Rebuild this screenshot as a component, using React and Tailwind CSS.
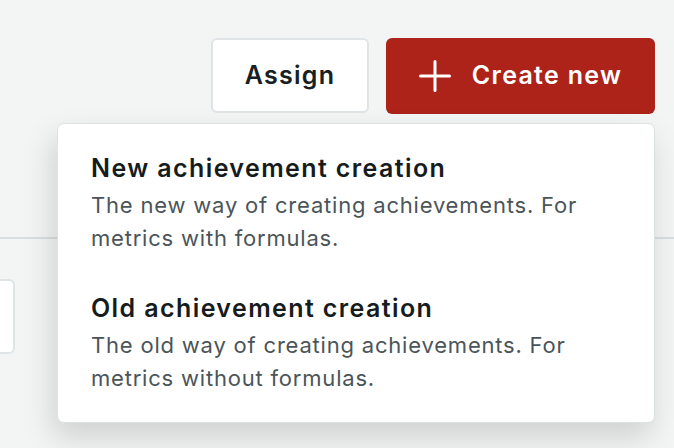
const menuItems = [
  {
    title: "New achievement creation",
    desc: "The new way of creating achievements. For metrics with formulas.",
  },
  {
    title: "Old achievement creation",
    desc: "The old way of creating achievements. For metrics without formulas.",
  },
];

function PlusIcon() {
  return (
    <svg width="32" height="32" viewBox="0 0 32 32" fill="none" stroke="currentColor" strokeWidth="3" strokeLinecap="round">
      <path d="M16 1.5v29M1.5 16h29" />
    </svg>
  );
}

export default function App() {
  return (
    <div
      className="relative h-[448px] w-[674px] overflow-hidden bg-[#f3f4f4] text-[#161c1e]"
      style={{ fontFamily: "Inter, 'Noto Sans', sans-serif" }}
    >
      <div className="flex justify-end gap-[17px] pr-[19px] pt-[38px]">
        <button className="h-[75px] w-[158px] rounded-[6px] border-2 border-[#dfe4e6] bg-white text-[25px] font-semibold tracking-[1.3px] text-[#172023]">
          Assign
        </button>
        <button className="flex h-[76px] w-[269px] items-center justify-center gap-[21px] rounded-[6px] bg-[#ad2219] text-[25px] font-semibold tracking-[1.3px] text-white">
          <PlusIcon />
          Create new
        </button>
      </div>

      <div className="mt-[123px] border-t-2 border-[#d8dee1]" />
      <div className="ml-[-20px] mt-[40px] h-[75px] w-[35px] rounded-[6px] border-2 border-[#dfe4e6] bg-white" />

      <div className="absolute left-[57px] top-[123px] w-[598px] rounded-[7px] border border-[#dde2e4] bg-white pb-[27px] pl-[33px] pr-[40px] pt-[27px] shadow-[-4px_14px_30px_rgba(0,0,0,0.15)]">
        <div className="flex flex-col gap-[36px]">
          {menuItems.map((item) => (
            <div key={item.title}>
              <div className="text-[25px] font-semibold leading-[34px] tracking-[1.4px] text-[#161c1e]">
                {item.title}
              </div>
              <div className="mt-[4px] text-[22px] leading-[33px] tracking-[0.8px] text-[#4b5559]">
                {item.desc}
              </div>
            </div>
          ))}
        </div>
      </div>
    </div>
  );
}
